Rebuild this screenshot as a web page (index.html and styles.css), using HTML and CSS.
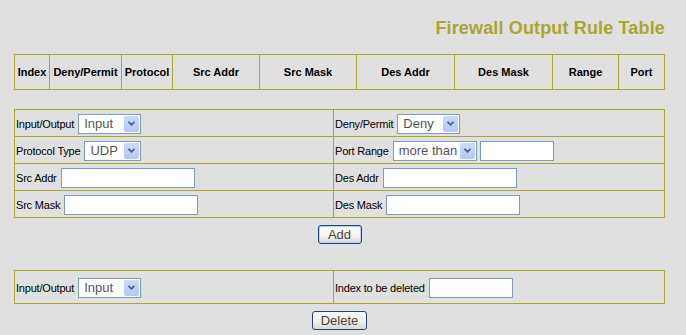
FILE: index.html
```html
<!DOCTYPE html>
<html lang="en">
<head>
    <meta charset="UTF-8">
    <title>Firewall Output Rule Table</title>
    <link rel="stylesheet" href="styles.css">
</head>
<body>
    <div class="page">
        <h1 class="title">Firewall Output Rule Table</h1>

        <table class="grid rules">
            <colgroup>
                <col class="c-index"><col class="c-deny"><col class="c-proto"><col class="c-saddr"><col class="c-smask">
                <col class="c-daddr"><col class="c-dmask"><col class="c-range"><col class="c-port">
            </colgroup>
            <tr>
                <th>Index</th>
                <th>Deny/Permit</th>
                <th>Protocol</th>
                <th>Src Addr</th>
                <th>Src Mask</th>
                <th>Des Addr</th>
                <th>Des Mask</th>
                <th>Range</th>
                <th>Port</th>
            </tr>
        </table>

        <form id="add-form">
            <table class="grid form">
                <colgroup><col class="c-left"><col class="c-right"></colgroup>
                <tr>
                    <td>
                        <div class="field">
                            <label for="io">Input/Output</label>
                            <span class="pick w63">
                                <select id="io" name="io"><option>Input</option><option>Output</option></select>
                                <span class="arrow"><svg width="7" height="5" viewBox="0 0 7 5"><path d="M0.5 0.8 L3.5 3.8 L6.5 0.8" fill="none" stroke="#4d6185" stroke-width="1.8"/></svg></span>
                            </span>
                        </div>
                    </td>
                    <td>
                        <div class="field">
                            <label for="action">Deny/Permit</label>
                            <span class="pick w63">
                                <select id="action" name="action"><option>Deny</option><option>Permit</option></select>
                                <span class="arrow"><svg width="7" height="5" viewBox="0 0 7 5"><path d="M0.5 0.8 L3.5 3.8 L6.5 0.8" fill="none" stroke="#4d6185" stroke-width="1.8"/></svg></span>
                            </span>
                        </div>
                    </td>
                </tr>
                <tr>
                    <td>
                        <div class="field">
                            <label for="proto">Protocol Type</label>
                            <span class="pick w56">
                                <select id="proto" name="proto"><option>UDP</option><option>TCP</option></select>
                                <span class="arrow"><svg width="7" height="5" viewBox="0 0 7 5"><path d="M0.5 0.8 L3.5 3.8 L6.5 0.8" fill="none" stroke="#4d6185" stroke-width="1.8"/></svg></span>
                            </span>
                        </div>
                    </td>
                    <td>
                        <div class="field">
                            <label for="range">Port Range</label>
                            <span class="pick w83">
                                <select id="range" name="range"><option>more than</option><option>less than</option><option>equal</option></select>
                                <span class="arrow"><svg width="7" height="5" viewBox="0 0 7 5"><path d="M0.5 0.8 L3.5 3.8 L6.5 0.8" fill="none" stroke="#4d6185" stroke-width="1.8"/></svg></span>
                            </span>
                            <input type="text" class="box w73" name="port">
                        </div>
                    </td>
                </tr>
                <tr>
                    <td>
                        <div class="field">
                            <label for="saddr">Src Addr</label>
                            <input type="text" id="saddr" class="box w133" name="saddr">
                        </div>
                    </td>
                    <td>
                        <div class="field">
                            <label for="daddr">Des Addr</label>
                            <input type="text" id="daddr" class="box w133" name="daddr">
                        </div>
                    </td>
                </tr>
                <tr>
                    <td>
                        <div class="field">
                            <label for="smask">Src Mask</label>
                            <input type="text" id="smask" class="box w133" name="smask">
                        </div>
                    </td>
                    <td>
                        <div class="field">
                            <label for="dmask">Des Mask</label>
                            <input type="text" id="dmask" class="box w133" name="dmask">
                        </div>
                    </td>
                </tr>
            </table>
            <div class="actions">
                <button type="submit" class="btn btn-add">Add</button>
            </div>
        </form>

        <form id="del-form">
            <table class="grid form del">
                <colgroup><col class="c-left"><col class="c-right"></colgroup>
                <tr>
                    <td>
                        <div class="field">
                            <label for="io2">Input/Output</label>
                            <span class="pick w63">
                                <select id="io2" name="io"><option>Input</option><option>Output</option></select>
                                <span class="arrow"><svg width="7" height="5" viewBox="0 0 7 5"><path d="M0.5 0.8 L3.5 3.8 L6.5 0.8" fill="none" stroke="#4d6185" stroke-width="1.8"/></svg></span>
                            </span>
                        </div>
                    </td>
                    <td>
                        <div class="field">
                            <label for="idx">Index to be deleted</label>
                            <input type="text" id="idx" class="box w83" name="index">
                        </div>
                    </td>
                </tr>
            </table>
            <div class="actions">
                <button type="submit" class="btn btn-del">Delete</button>
            </div>
        </form>
    </div>
</body>
</html>
```

FILE: styles.css
```css
body {
    margin: 0;
    background-color: #e0e0e0;
    font-family: "Liberation Sans", Arial, sans-serif;
    font-size: 11px;
    color: #000;
}

.page {
    width: 651px;
    margin-left: 14px;
    padding-top: 18px;
}

.title {
    margin: 0 0 16px 0;
    text-align: right;
    font-size: 18px;
    line-height: 20px;
    font-weight: bold;
    letter-spacing: 0.15px;
    color: #aea531;
}

form {
    margin: 0;
}

.grid {
    width: 651px;
    border-collapse: collapse;
    table-layout: fixed;
}

.grid th,
.grid td {
    border: 1px solid #aea531;
    padding: 0 1px;
}

/* header table */
.rules th {
    height: 34px;
    font-size: 11px;
    font-weight: bold;
    text-align: center;
    white-space: nowrap;
}

.c-index { width: 35px; }
.c-deny { width: 72px; }
.c-proto { width: 51px; }
.c-saddr { width: 87px; }
.c-smask { width: 97px; }
.c-daddr { width: 98px; }
.c-dmask { width: 98px; }
.c-range { width: 66px; }
.c-port { width: 46px; }

/* form tables */
.form {
    margin-top: 19px;
}

.c-left { width: 319px; }
.c-right { width: 331px; }

.form td {
    height: 26px;
}

.form.del {
    margin-top: 26px;
}

.form.del td {
    height: 32px;
}

.field {
    display: flex;
    align-items: center;
    gap: 4px;
    padding-top: 1px;
}

.field label {
    white-space: nowrap;
    letter-spacing: -0.2px;
}

.box {
    box-sizing: border-box;
    height: 20px;
    margin: 0;
    padding: 0 3px;
    border: 1px solid #7f9db9;
    background: #fff;
    font-family: "Liberation Sans", Arial, sans-serif;
    font-size: 12px;
}

.w133 { width: 134px; }
.w73 { width: 74px; margin-left: -1px; }
.w83 { width: 84px; }

.pick {
    position: relative;
    display: inline-block;
    height: 20px;
}

.pick select {
    -webkit-appearance: none;
    appearance: none;
    box-sizing: border-box;
    width: 100%;
    height: 20px;
    margin: 0;
    padding: 0 0 0 5px;
    border: 1px solid #7f9db9;
    border-radius: 0;
    background: #fff;
    font-family: "Liberation Sans", Arial, sans-serif;
    font-size: 13px;
    color: #555;
}

.pick .arrow {
    position: absolute;
    top: 2px;
    right: 2px;
    width: 15px;
    height: 16px;
    box-sizing: border-box;
    border-radius: 2px;
    background: linear-gradient(#cbdafc, #b4c8f8);
    display: flex;
    align-items: center;
    justify-content: center;
    pointer-events: none;
}

.w63 { width: 63px; }
.w56 { width: 57px; }
.w83.pick { width: 84px; }

/* buttons */
.actions {
    display: flex;
    justify-content: center;
    margin-top: 7px;
}

.btn {
    box-sizing: border-box;
    height: 19px;
    padding: 0;
    border-radius: 3px;
    font-family: "Liberation Sans", Arial, sans-serif;
    font-size: 13px;
    line-height: 15px;
    color: #444;
    cursor: pointer;
}

.btn-add {
    width: 44px;
    border: 1px solid #1a4680;
    background: linear-gradient(#ffffff, #f2f1ec 60%, #dcdad0);
    box-shadow: inset 0 0 0 1px #b9cdf0;
}

.btn-del {
    width: 55px;
    border: 1px solid #23466e;
    background: linear-gradient(#fbfbf9, #eeede7 60%, #dad8cf);
}
```
